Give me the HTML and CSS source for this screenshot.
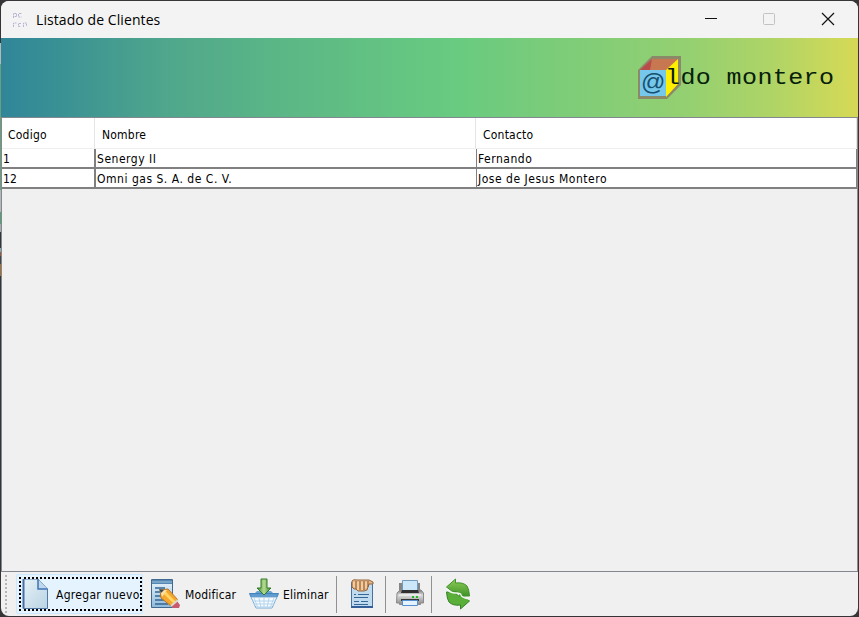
FILE: index.html
```html
<!DOCTYPE html>
<html lang="es">
<head>
<meta charset="utf-8">
<title>Listado de Clientes</title>
<link rel="stylesheet" href="styles.css">
</head>
<body>
<main class="window">
  <header class="titlebar">
    <svg class="app-icon" width="16" height="18" viewBox="0 0 16 18" fill="none" stroke="#b5b5d3"><path d="M2.500 7V2.500H5.500V5.500H3M8 2.500h3M7.500 3v3h3M2.500 16v-4h3M10 12.500H7.500v3h2M12.500 16v-4h3v3" stroke-dasharray="2 .6"/></svg>
    <h1>Listado de Clientes</h1>
    <svg class="controls" width="132" height="20" viewBox="0 0 132 20" fill="none"><path d="M0 8.500h12" stroke="#111"/><rect x="58.500" y="3.500" width="11" height="11" rx="1" stroke="#c2c2c2"/><path d="M117 3l12 12M129 3l-12 12" stroke="#111" stroke-width="1.200"/></svg>
  </header>
  <section class="banner">
    <div class="brand">
      <svg width="44" height="44" viewBox="0 0 44 44">
        <path d="M0 14 14 0H43V29L29 43H0Z" fill="#8c8969"/>
        <path d="M2 14 14 3H40L29 14Z" fill="#c87850"/><path d="M2 14 14 3 12 14Z" fill="#b94b4b"/>
        <path d="M28 14 40 3V28L28 41Z" fill="#fff000"/>
        <path d="M2 14H28V40H2Z" fill="#75c8ec"/>
      </svg>
      <span class="at">@</span>
      <span class="wordmark">ldo montero</span>
    </div>
  </section>
  <section class="scrollpane">
    <div class="row head"><div>Codigo</div><div>Nombre</div><div>Contacto</div></div>
    <div class="row"><div>1</div><div>Senergy II</div><div>Fernando</div></div>
    <div class="row"><div>12</div><div>Omni gas S. A. de C. V.</div><div>Jose de Jesus Montero</div></div>
  </section>
  <footer class="toolbar">
    <span class="grip"></span>
    <button class="add"><span class="focus">
      <svg width="27" height="32" viewBox="0 0 27 32"><defs><linearGradient id="page" x2="1" y2="1"><stop stop-color="#e6f1f7"/><stop offset="1" stop-color="#b9d3e3"/></linearGradient></defs><path d="M1.500 1H16L25.500 11V30.500H1.500Z" fill="url(#page)" stroke="#5279a5"/><path d="M1.500 1v29.500" stroke="#426fa9" stroke-width="2"/><path d="M16 1V11H25.500" fill="#bfd7ec" stroke="#3f73b2" stroke-width="1.500"/><path d="M17 0H27V10Z" fill="#e5f3ff"/></svg>
      <span>Agregar nuevo</span></span></button>
    <button class="edit">
      <svg width="30" height="32" viewBox="0 0 30 32"><defs><linearGradient id="note" y2="1" x2="0"><stop stop-color="#edf6fc"/><stop offset="1" stop-color="#8db9da"/></linearGradient></defs><path d="M.5 1.500H21.500V29.500H.5Z" fill="url(#note)" stroke="#41698f"/><path d="M1 2h20v4H1Z" fill="#5687b3"/><path d="M1 4h20" stroke="#9ac1dc"/><path d="M4 10h10M4 14h8M4 18h6M4 22h9M4 26h13" stroke="#326594" stroke-width="1.500"/><path d="M9 12 17 11 27 22 20 28 10 20Z" fill="#f5a62c" stroke="#b67427"/><path d="M13 14 24 25" stroke="#ffd564" stroke-width="3"/><path d="M9 12 16 12 11 19Z" fill="#f7dfaa"/><path d="M8 11l5 1-3 3Z" fill="#39434a"/><path d="M20 28 26 23 29 27 28 30H22Z" fill="#c95a6d"/><path d="M20 28 27 22" stroke="#d9d9ce" stroke-width="2"/></svg>
      <span>Modificar</span></button>
    <button class="remove">
      <svg width="30" height="32" viewBox="0 0 30 32"><defs><linearGradient id="arrow"><stop stop-color="#3b872d"/><stop offset=".5" stop-color="#b5dc91"/><stop offset="1" stop-color="#3b872d"/></linearGradient></defs><path d="M4 17 8 13H22L26 17Z" fill="#68a3d3"/><path d="M.5 15.500H29.500L28 19H2Z" fill="#5e9bd1" stroke="#4383ba"/><path d="M2 19H28L23 30H7Z" fill="#f6fbff" stroke="#78aad3"/><path d="M5 20l4 10M10 20l2 10M15 20v10M20 20l-2 10M25 20l-4 10M3 23h24M5 26h20M7 29h16" stroke="#b5d5ec"/><path d="M12 1h6v9h4l-7 7-7-7h4Z" fill="url(#arrow)" stroke="#347b29"/></svg>
      <span>Eliminar</span></button>
    <i class="sep"></i>
    <button class="tool report" aria-label="Reporte"><svg width="24" height="32" viewBox="0 0 24 32"><path d="M1.500 4.500H22.500V29.500H1.500Z" fill="#c0dbee" stroke="#49719f"/><path d="M1 29h22" stroke="#355f99" stroke-width="2"/><path d="M4 16.500h2m2 0h11M4 19.500h14M4 23.500h5m2 0h7M4 26.500h14" stroke="#366797"/><path d="M2 3Q3 1 7 2H19L23 4V6H19L17 12 14 13 11 13 8 13 6 11H4L2 9Z" fill="#e7b887" stroke="#93633d"/><path d="M6 3v8M10 3v9M14 3v9M18 3v6" stroke="#8a5935"/><path d="M4 4v5M8 4v8M12 4v8M16 4v6" stroke="#ffe0b2"/></svg></button>
    <i class="sep"></i>
    <button class="tool print" aria-label="Imprimir"><svg width="28" height="32" viewBox="0 0 28 32"><defs><linearGradient id="metal" y2="1" x2="0"><stop stop-color="#777"/><stop offset=".35" stop-color="#ddd"/><stop offset="1" stop-color="#888"/></linearGradient></defs><path d="M3 5h21v11H3Z" fill="#858585"/><path d="M6.500 2.500h15v11h-15Z" fill="#cce7fa" stroke="#7399bc"/><path d="M1 15 4 12H6V14H22V12H25L27.500 15V25H24.500V26.500H3.500V25H.5Z" fill="url(#metal)" stroke="#8b8b8b"/><path d="M6 12h16l1 3H5Z" fill="#303030"/><path d="M3 17h22" stroke="#e8e8e8" stroke-width="2"/><path d="M16 18h2v2h-2zM20 18h2v2h-2z" fill="#24b52b"/><path d="M5 22h18" stroke="#353535" stroke-width="2"/><path d="M6.500 22.500h15v5h-15Z" fill="#e5f3ff" stroke="#558ed1"/></svg></button>
    <i class="sep"></i>
    <button class="tool refresh" aria-label="Actualizar"><svg width="26" height="32" viewBox="0 0 26 32"><defs><linearGradient id="green" y2="1" x2="0"><stop stop-color="#8fcd57"/><stop offset="1" stop-color="#3f9428"/></linearGradient></defs><path d="M10.500 1V5Q18 4 22 8Q24 11 24.500 18L15 18Q15 14 10.500 14V16L1.500 9Z" fill="url(#green)" stroke="#43912f"/><path d="M10.500 1V5Q18 4 22 8Q24 11 24.500 18L15 18Q15 14 10.500 14V16L1.500 9Z" transform="rotate(180 13 16)" fill="#5aaf39" stroke="#37832a"/><path d="M2 11Q5 15 10.500 15T16 17T24 21" fill="none" stroke="#f0f7ed" stroke-width="1.500"/></svg></button>
  </footer>
</main>
</body>
</html>
```
FILE: styles.css
```css
* { box-sizing: border-box; }
html, body { margin: 0; height: 100%; overflow: hidden; }
body {
  padding: 1px;
  background: linear-gradient(#353535 0 43px, #b7b7b7 43px 64px, #68a07d 64px 190px, #b7b7b7 190px 212px, #56a078 212px 224px, #aaa 224px 232px, #353535 232px 248px, #8baaa5 248px 252px, #9c5935 252px 256px, #444 256px 264px, #a67031 264px 276px, #353535 276px) left / 1px 100% no-repeat, #373537;
  color: #000;
  font: 12px/16px "DejaVu Sans Condensed", "DejaVu Sans", sans-serif;
}
.window {
  display: flex;
  flex-direction: column;
  height: 615px;
  width: 857px;
  background: #f0f0f0;
  border-radius: 8px;
  overflow: hidden;
}
.titlebar {
  height: 37px;
  flex: none;
  display: flex;
  align-items: center;
  background: #f3f3f3;
  padding: 0 21px 0 10px;
}
.app-icon { margin-right: 9px; }
h1 { margin: 0; font: 14px/20px "Open Sans", sans-serif; letter-spacing: .08px; }
.controls { margin-left: auto; }
.banner {
  height: 79px;
  flex: none;
  display: flex;
  justify-content: flex-end;
  padding: 18px 22px 0 0;
  background: linear-gradient(90deg, #308698, #3a9194 7%, #4fa68c 19%, #5bb686 32%, #68cb80 53%, #7ccc79 65%, #94d071 80%, #afd466 90%, #d3d957 99%);
}
.brand { position: relative; display: flex; width: 198px; height: 44px; }
.brand svg { flex: none; }
.at {
  position: absolute;
  left: 3px;
  top: 13px;
  color: #184f70;
  font: 24px/26px "Liberation Sans", sans-serif;
}
.wordmark {
  position: absolute;
  left: 27px;
  top: 8px;
  color: #06200b;
  font: 25px/30px "Liberation Mono", monospace;
  letter-spacing: .4px;
  white-space: nowrap;
  transform: scaleY(.9);
}
.scrollpane {
  flex: 1;
  border: 1px solid #828790;
  border-right-color: #8c8c8c;
}
.row {
  display: grid;
  grid-template-columns: 94px 381px 1fr;
  height: 20px;
  background: #fff;
  border-bottom: 2px solid #808080;
  letter-spacing: .52px;
}
.row > div { padding: 2px 0 0 1px; border-right: 1px solid #808080; }
.row > div:first-child { border-right-width: 2px; letter-spacing: .1px; }
.row.head {
  grid-template-columns: 93px 381px 1fr;
  height: 31px;
  border-bottom: 1px solid #efefef;
  letter-spacing: .22px;
}
.row.head > div { padding: 9px 0 0 7px; border-right: 1px solid #e5e5e5; }
.row.head > div:first-child { padding-left: 6px; border-right-width: 1px; letter-spacing: .22px; }
.toolbar {
  height: 44px;
  flex: none;
  display: flex;
  align-items: center;
}
.grip {
  width: 2px;
  height: 38px;
  margin: 0 9px 0 4px;
  background: repeating-linear-gradient(#b5b5b5 0 2px, transparent 2px 4px);
}
button {
  display: flex;
  align-items: center;
  flex: none;
  padding: 0;
  border: 0;
  background: none;
  color: inherit;
  font: inherit;
  letter-spacing: .18px;
  white-space: nowrap;
}
button svg { display: block; flex: none; }
button span span, button > span:not(.focus) { padding-top: 2px; }
.add {
  width: 127px;
  height: 40px;
  padding: 0 2px;
  background: #e5f3ff;
  border: 1px solid #cce8ff;
  border-radius: 2px;
  letter-spacing: .3px;
}
.focus {
  display: flex;
  align-items: center;
  width: 123px;
  flex: none;
  height: 34px;
  overflow: hidden;
  border: 2px dotted #000;
  padding-left: 1px;
}
.focus svg { margin-right: 7px; }
.edit { margin-left: 8px; width: 98px; }
.edit svg { margin-right: 4px; }
.remove { width: 87px; }
.remove svg { margin-right: 4px; }
.sep { width: 1px; height: 37px; background: #919191; flex: none; }
.report { width: 48px; padding-left: 13px; }
.print { width: 45px; padding-left: 10px; }
.refresh { padding-left: 13px; }
```
